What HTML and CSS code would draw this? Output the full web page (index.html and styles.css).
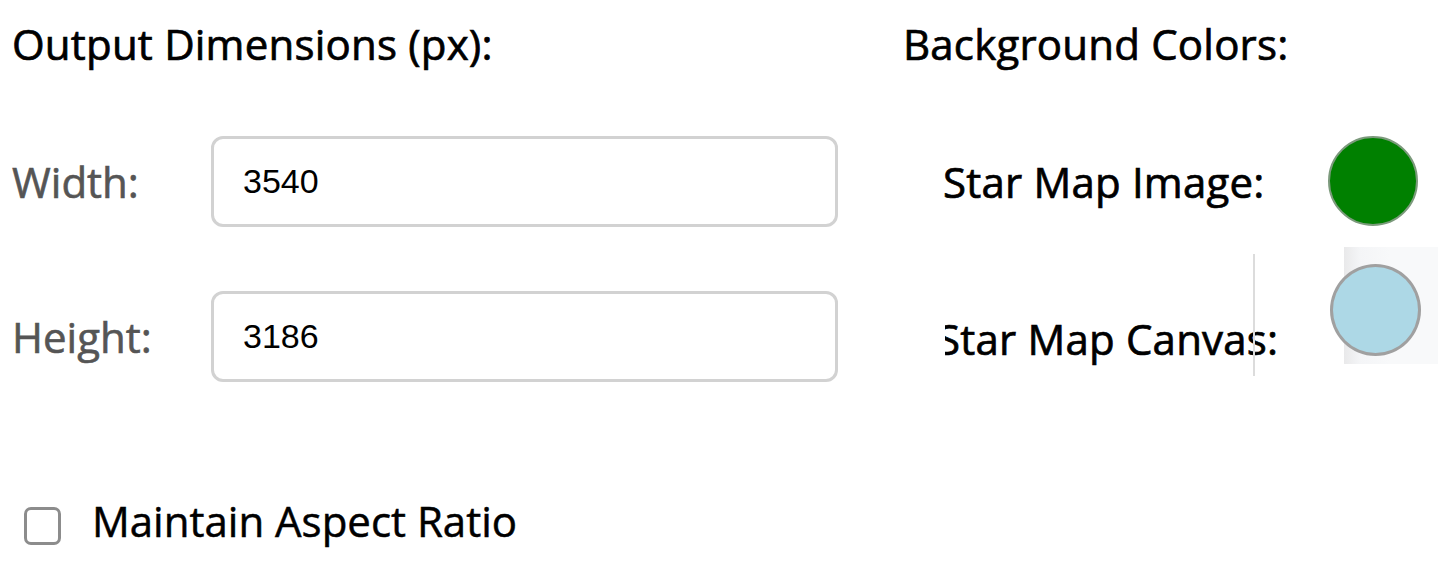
FILE: index.html
```html
<!DOCTYPE html>
<html>
<head>
<meta charset="utf-8">
<link rel="stylesheet" href="styles.css">
</head>
<body>
<div class="panel">
  <section class="col-left">
    <h2 class="title">Output Dimensions (px):</h2>
    <div class="field first">
      <label class="field-label">Width:</label>
      <div class="input">3540</div>
    </div>
    <div class="field">
      <label class="field-label">Height:</label>
      <div class="input">3186</div>
    </div>
    <div class="check-row">
      <span class="checkbox"></span>
      <span class="check-label">Maintain Aspect Ratio</span>
    </div>
  </section>
  <section class="col-right">
    <h2 class="title">Background Colors:</h2>
    <div class="color-row first">
      <span class="color-label">Star Map Image:</span>
      <span class="swatch swatch-green"></span>
    </div>
    <div class="color-row second">
      <div class="clip-label"><span class="color-label shifted">Star Map Canvas:</span></div>
      <span class="divider"></span>
      <div class="swatch-wrap">
        <span class="swatch swatch-blue"></span>
      </div>
    </div>
  </section>
</div>
</body>
</html>
```

FILE: styles.css
```css
html, body {
  margin: 0;
  padding: 0;
  background: #ffffff;
}
body {
  font-family: "Open Sans", "Liberation Sans", sans-serif;
  color: #000;
  overflow: hidden;
}
.panel {
  display: flex;
  padding-top: 15px;
  height: 548px;
}
.title {
  margin: 0;
  font-size: 42px;
  line-height: 57px;
  font-weight: 400;
  color: #000;
  white-space: nowrap;
  -webkit-text-stroke: 0.7px #000;
  letter-spacing: 0.2px;
}
.col-left {
  width: 903px;
  flex: none;
  padding-left: 12px;
  box-sizing: border-box;
  display: flex;
  flex-direction: column;
}
.field {
  display: flex;
  align-items: center;
  margin-top: 64px;
  height: 91px;
}
.field-label {
  width: 199px;
  font-size: 42px;
  line-height: 57px;
  color: #555;
  -webkit-text-stroke: 0.6px #555;
}
.input {
  width: 627px;
  height: 91px;
  box-sizing: border-box;
  border: 3px solid #d2d2d2;
  border-radius: 12px;
  padding-left: 29px;
  display: flex;
  align-items: center;
  font-family: "Liberation Sans", Arial, sans-serif;
  font-size: 34px;
  color: #000;
}
.check-row {
  display: flex;
  align-items: flex-start;
  margin-top: 110px;
  margin-left: 12px;
}
.checkbox {
  width: 37px;
  height: 38px;
  box-sizing: border-box;
  border: 3px solid #8c8c8c;
  border-radius: 7px;
  margin-top: 15px;
  background: #fff;
}
.check-label {
  margin-left: 31px;
  font-size: 42px;
  line-height: 57px;
  white-space: nowrap;
  -webkit-text-stroke: 0.5px #000;
}
.col-right {
  flex: 1;
  display: flex;
  flex-direction: column;
}
.color-row {
  display: flex;
  position: relative;
}
.color-row.first {
  margin-top: 64px;
  height: 90px;
  align-items: center;
  padding-left: 40px;
}
.color-label {
  font-size: 42px;
  line-height: 57px;
  white-space: nowrap;
  -webkit-text-stroke: 0.7px #000;
  letter-spacing: 0.2px;
}
.color-row.first .color-label {
  width: 385px;
}
.swatch {
  display: block;
  border-radius: 50%;
  box-sizing: border-box;
}
.swatch-green {
  width: 90px;
  height: 90px;
  background: #008000;
  border: 2px solid #7c9a7c;
}
.color-row.second {
  margin-top: 21px;
  height: 129px;
  align-items: flex-start;
}
.clip-label {
  margin-left: 42px;
  margin-top: 63px;
  width: 385px;
  overflow: hidden;
}
.shifted {
  display: block;
  margin-left: -8px;
}
.divider {
  position: absolute;
  left: 350px;
  top: 7px;
  width: 2px;
  height: 122px;
  background: #dcdcdc;
}
.swatch-wrap {
  width: 108px;
  height: 117px;
  background: linear-gradient(to right, transparent 0, transparent 14px, #e9e9ea 14px, #f4f5f7 30px, #f8f9fa 60px);
  padding-top: 17px;
  box-sizing: border-box;
}
.swatch-blue {
  width: 91px;
  height: 92px;
  background: #add8e6;
  border: 3px solid #a0a0a0;
}
```
